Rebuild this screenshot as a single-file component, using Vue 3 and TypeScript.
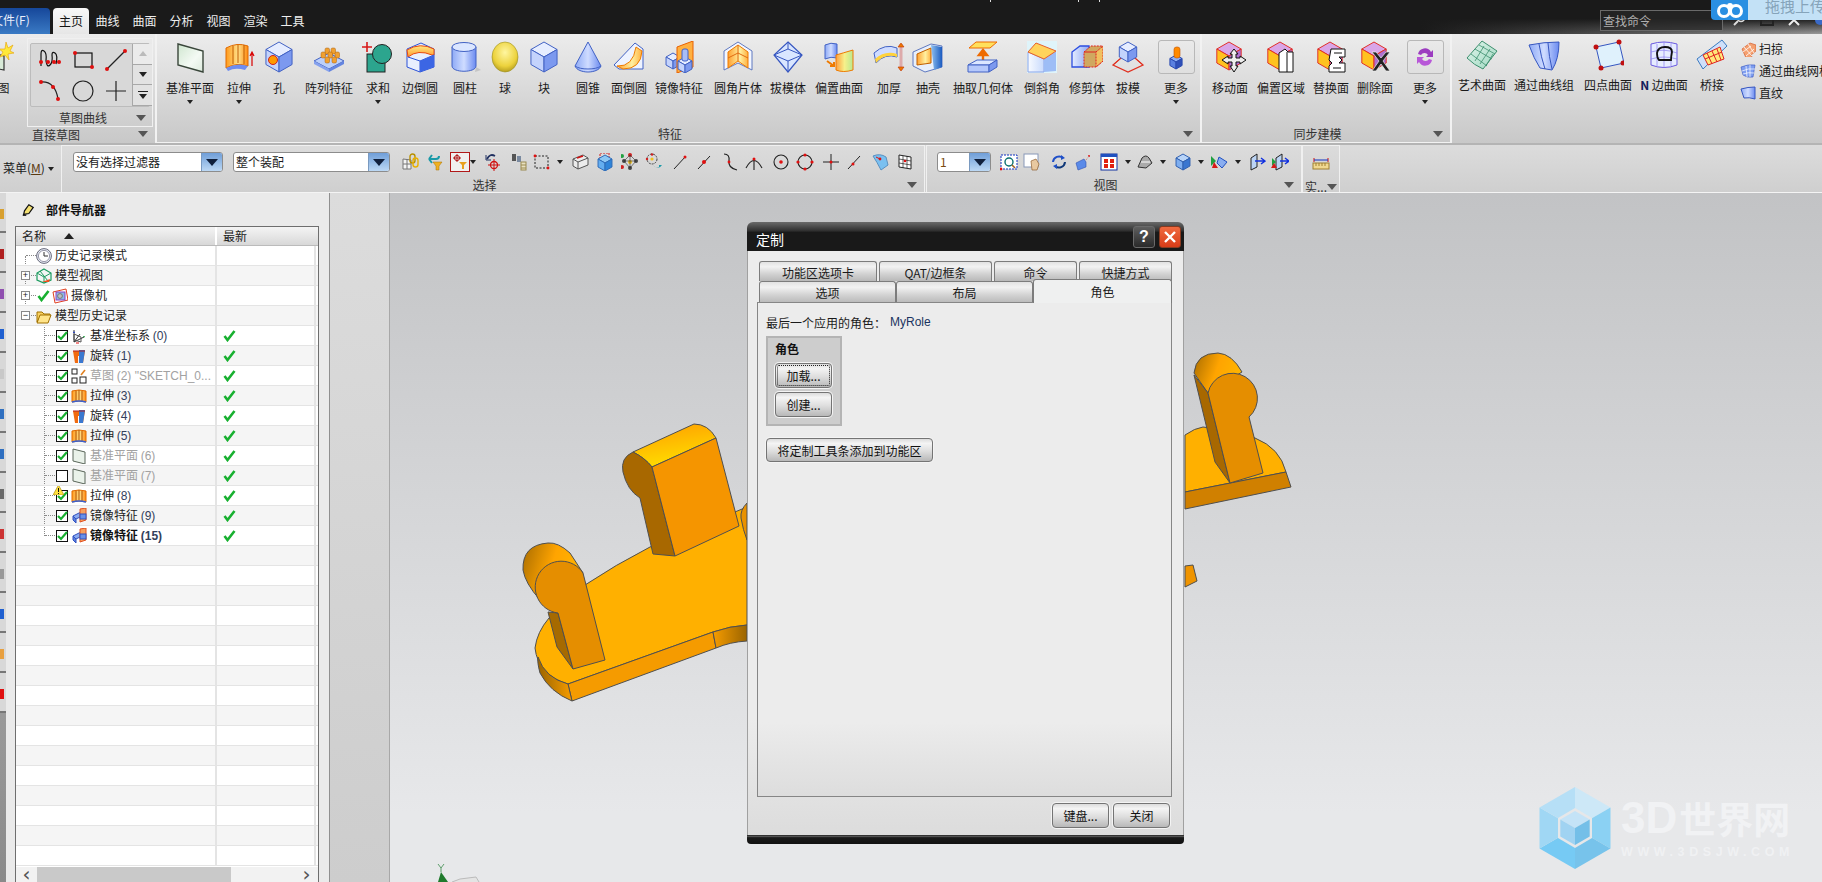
<script setup lang="ts">
interface RibbonBtn {
  label: string
  icon: string
  cx: number
  arrow?: boolean
  boxed?: boolean
}

interface ToolItem {
  cx: number
  icon?: string
  hot?: boolean
}

interface TreeRow {
  label?: string
  num?: string
  icon?: string
  level?: number
  expand?: string
  check?: boolean | null
  gray?: boolean
  bold?: boolean
  warn?: boolean
  done?: boolean
  green?: boolean
}

// iso cube used by most of the ribbon icons
function cube(cx: number, cy: number, r: number, top = '#e6edff', left = '#c4d3fc', right = '#7c99ef', st = '#4262c4') {
  const dx = r * 0.87
  const dy = r * 0.5
  const p = (a: number[][]) => a.map((q) => q.join(',')).join(' ')
  const T = [cx, cy - r], UR = [cx + dx, cy - dy], LR = [cx + dx, cy + dy], B = [cx, cy + r], LL = [cx - dx, cy + dy], UL = [cx - dx, cy - dy], C = [cx, cy]
  return `<g stroke="${st}" stroke-width="1" stroke-linejoin="round"><polygon points="${p([T, UR, C, UL])}" fill="${top}"/><polygon points="${p([UL, C, B, LL])}" fill="${left}"/><polygon points="${p([C, UR, LR, B])}" fill="${right}"/></g>`
}
const purple = (over: string) =>
  cube(15, 15, 14, '#d9a6e8', '#ffc21f', '#b070d0', '#e0302a') + over

const icons: Record<string, string> = {
  sketch: `<polygon points="1,10 22,16 22,30 1,26" fill="#d8ead8" stroke="#333" stroke-width="1.2"/><path d="M24 2l2 6 5-3-3 6 4 2-6 1 1 6-4-5-5 2 3-5-4-3 6 0z" fill="#ffe93a" stroke="#e8a000" stroke-width=".6"/>`,
  datum: `<polygon points="4,3 29,10 29,31 4,24" fill="url(#gPale)" stroke="#39463a" stroke-width="1.4"/>`,
  extrude: `<path d="M3 7Q14 1 25 5V25Q14 21 3 27Z" fill="url(#gOr)" stroke="#e06a00"/><path d="M10 5V23M15 4V22M21 4V23" stroke="#c05a00" fill="none"/><path d="M3 27Q14 21 25 25L22 29Q12 26 5 30Z" fill="#6f8df0"/><path d="M29 25V12M27 15l2-4 2 4" stroke="#d80000" stroke-width="1.2" fill="none"/>`,
  hole: cube(16, 16, 15) + `<circle cx="10" cy="19" r="4.5" fill="#ff9a00" stroke="#d02020"/>`,
  pattern: `<polygon points="16,12 31,20 16,28 1,20" fill="#bcd0fa" stroke="#4262c4"/><polygon points="1,20 16,28 16,31 1,23" fill="#86a2ee"/><polygon points="16,28 31,20 31,23 16,31" fill="#6485e0"/>` + [[12, 7], [18, 7], [8, 11], [15, 11], [22, 11], [12, 16], [19, 16]].map(([x, y]) => `<rect x="${x}" y="${y}" width="4.5" height="6" rx="1.5" fill="#f0a030" stroke="#a86010" stroke-width=".5"/>`).join(''),
  unite: `<rect x="5" y="13" width="18" height="18" fill="#2ca58e" stroke="#222"/><circle cx="20" cy="13" r="9.5" fill="#2ca58e" stroke="#222"/><path d="M5 1v10M0 6h10" stroke="#d81818" stroke-width="1.6"/>`,
  edge: `<polygon points="3,8 17,2 30,8 30,26 16,31 3,26" fill="#e8effe" stroke="#2c52d8"/><path d="M3 9Q16 1 30 8V14H28Q14 8 4 16Z" fill="url(#gYO)" stroke="#e84a10"/><path d="M16 20V31M30 14L16 20 4 16" stroke="#2c52d8" fill="none"/><polygon points="16,20 30,14 30,26 16,31" fill="#3c66e4"/>`,
  cyl: `<path d="M3 6V25C3 32 27 32 27 25V6Z" fill="url(#gBlueH)" stroke="#4262c4"/><ellipse cx="15" cy="6" rx="12" ry="4.5" fill="#dbe6ff" stroke="#4262c4"/><path d="M27 26l5 3-6 2z" fill="#aaa" opacity=".5"/>`,
  sphere: `<ellipse cx="16" cy="16" rx="13" ry="15" fill="url(#gBall)" stroke="#9c9020" stroke-width=".6"/>`,
  block: cube(16, 16, 15),
  cone: `<path d="M16 1L3 25C6 33 26 33 29 25Z" fill="url(#gBlueH)" stroke="#4262c4"/><path d="M3 25C8 29 24 29 29 25" fill="none" stroke="#4262c4"/>`,
  faceblend: `<polygon points="22,2 30,8 30,28 6,28 1,24" fill="#eef3ff" stroke="#4262c4"/><path d="M4 25Q20 26 23 6L29 10Q28 28 10 28Z" fill="url(#gYO2)" stroke="#ee7a00"/>`,
  mirror: cube(10, 20, 8) + `<polygon points="14,6 30,0 30,26 14,32" fill="#ffb040" stroke="#e86000"/>` + cube(22, 24, 8) + `<rect x="19" y="8" width="6" height="12" rx="2" fill="#a8bdf8" stroke="#4262c4"/>`,
  fsheet: `<path d="M2 29V10L16 1 30 10V29L16 22Z" fill="#f4f7ff" stroke="#5e78c0"/><path d="M6 27V11L16 4 26 11V27L16 20Z" fill="url(#gYO2)" stroke="#ee7a00"/><path d="M16 4V20M6 17L16 12 26 17" stroke="#e06a10" fill="none"/>`,
  draftb: `<polygon points="16,1 30,14 16,31 2,14" fill="#d9e6ff" stroke="#3656c0" stroke-width="1.2"/><path d="M2 14L16 8 30 14M2 14L16 20 30 14M16 8V1M16 20V31" fill="none" stroke="#3656c0"/>`,
  offset: `<path d="M2 4Q8 1 14 3V17Q8 15 2 18Z" fill="url(#gBlueH)" stroke="#4262c4"/><path d="M13 14Q20 12 30 9V29Q20 32 13 29Z" fill="url(#gGY)" stroke="#ee7a00"/><path d="M4 20l7 5M11 21v4H7" stroke="#ee7a00" stroke-width="2" fill="none"/>`,
  thicken: `<path d="M1 12Q12 2 24 7V16Q12 12 3 22Z" fill="#cfdcff" stroke="#4262c4"/><path d="M3 22Q12 12 24 16V13Q12 9 2 18Z" fill="#ffd23c"/><path d="M28 3v26" stroke="#ddaaaa" stroke-width="3"/><path d="M25 6l3-4 3 4zM25 26l3 4 3-4z" fill="#ee7a00" stroke="#c03000" stroke-width=".6"/>`,
  shell: `<polygon points="1,11 19,3 30,5 30,26 13,31 1,25" fill="#e8effa" stroke="#5e78c0"/><polygon points="5,13 19,7 19,22 5,24" fill="url(#gYO2)" stroke="#c06000"/><polygon points="19,4 30,6 30,26 22,29" fill="url(#gBlueD)"/>`,
  extract: `<polygon points="2,7 9,1 30,1 23,7" fill="#ffe05c" stroke="#ee6a00"/><path d="M16 22V11M12 14l4-5 4 5z" stroke="#ee6a00" stroke-width="2.4" fill="#ee6a00"/>` + `<polygon points="1,24 10,19 30,19 22,24" fill="#dbe6ff" stroke="#4262c4"/><polygon points="1,24 22,24 22,31 1,31" fill="#b5c8fb" stroke="#4262c4"/><polygon points="22,24 30,19 30,26 22,31" fill="#7c99ef" stroke="#4262c4"/>`,
  chamfer: `<rect x="1" y="0" width="30" height="32" fill="#dff4fa"/><polygon points="2,11 2,31 18,31 18,18" fill="url(#gPaleB)" stroke="#8aa4e8"/><polygon points="18,18 30,10 30,30 18,31" fill="#9dbdf6"/><polygon points="2,11 10,2 30,10 18,18" fill="#ffd35c" stroke="#e8602a"/>`,
  trim: `<polygon points="1,11 9,5 18,5 18,26 1,26" fill="url(#gBlueV)" stroke="#2c4ee0" stroke-width="1.3"/><polygon points="13,11 20,5 32,5 32,20 25,26 13,26" fill="#d0a860" stroke="#e02020" stroke-dasharray="2 1"/><polygon points="25,11 32,5 32,20 25,26" fill="#f0c060" stroke="#e02020" stroke-dasharray="2 1"/><path d="M13 11H25" stroke="#e02020"/>`,
  draft: `<polygon points="9,17 23,17 31,24 16,31 1,24" fill="none" stroke="#e03020" stroke-width="1.2"/><path d="M9 17L1 24M23 17L31 24" stroke="#e03020"/>` + cube(16, 11, 10),
  more: cube(16, 21, 7, '#8fb0f5', '#5a80e0', '#3050b8', '#2a4ab0') + `<rect x="14" y="6" width="6" height="11" rx="2.5" fill="#ff8a00" stroke="#c05000" stroke-width=".6"/>`,
  movef: purple(`<g stroke="#111" stroke-width="1" fill="#eee"><path d="M20 8l4 5h-2v4h4v-2l6 4-6 4v-2h-4v4h2l-4 6-4-6h2v-4h-4v2l-6-4 6-4v2h4v-4h-2z"/></g>`),
  offsetf: purple(`<path d="M14 12l6-4 3 3h5v20H14z" fill="#fff" stroke="#111"/><path d="M22 11v20" stroke="#111"/>`),
  replacef: purple(`<path d="M16 8h14v8h-6l3 3-3 3h6v9H14v-6l3-3-3-3z" fill="#fff" stroke="#111"/><path d="M19 12h8M18 27h8" stroke="#111"/>`),
  deletef: purple(`<path d="M13 11l7 9-7 10h4l5-7 5 7h4l-7-10 7-9h-4l-5 6-5-6z" fill="#222" stroke="#eee" stroke-width=".7"/>`),
  sync: `<path d="M9 13a7 7 0 0 1 13-2l2-2v7h-7l2-2a4 4 0 0 0-7 0z" fill="#9c3cc0"/><path d="M23 19a7 7 0 0 1-13 2l-2 2v-7h7l-2 2a4 4 0 0 0 7 0z" fill="#b858d8"/>`,
  studio: `<path d="M1 19L16 2 31 12 17 30Q8 26 1 19Z" fill="url(#gGreen)" stroke="#3d8f6e"/><path d="M5 15l16 12M9 10l17 10M13 6l16 9M9 22l9-15M14 25l10-15M20 27l7-12" stroke="#3d8f6e" fill="none" stroke-width=".8"/>`,
  through: `<path d="M1 6Q16 3 31 3Q31 20 24 31L12 29Q6 20 1 6Z" fill="url(#gBlueH)" stroke="#3656c0"/><path d="M11 5Q13 18 17 30M20 4Q21 18 24 30" stroke="#3656c0" fill="none"/>`,
  fourp: `<polygon points="4,8 27,3 32,24 9,29" fill="#dff1fc" stroke="#3656c0"/><g fill="#c01010"><circle cx="4" cy="8" r="2.5"/><circle cx="27" cy="3" r="2.5"/><circle cx="31" cy="24" r="2.5"/><circle cx="9" cy="29" r="2.5"/></g>`,
  nside: `<path d="M3 5Q16 1 29 5V26Q16 31 3 26Z" fill="#e6ecff" stroke="#6a5ae0"/><path d="M9 5V28M16 3V29M23 4V27M3 13Q16 9 29 14M3 20Q16 16 29 20" stroke="#8a80f0" fill="none" stroke-width=".7"/><path d="M9 14Q10 8 17 8T24 13Q23 18 23 21H11Q9 19 9 14Z" fill="none" stroke="#111" stroke-width="1.8"/>`,
  bridge: `<polygon points="1,20 26,1 31,7 7,30" fill="#cfe0fa" stroke="#3a7ac0"/><polygon points="7,16 24,8 28,20 12,26" fill="#ffe87a" stroke="#e02020"/><path d="M11 14l5 11M16 12l5 11M21 10l4 11M9 20l17-7" stroke="#e02020" fill="none"/>`,
  sweep: `<path d="M2 8l8-6 6 2 0 6-5 4 2 4-6 1z" fill="#f4a070" stroke="#d05020" stroke-width=".6" transform="scale(1)"/><path d="M4 6l8 9M8 3l6 9M3 11l8-6M6 15l8-7" stroke="#fff" stroke-width=".8" fill="none"/>`,
  mesh: `<path d="M1 4Q8 1 15 2L13 14Q7 15 3 12Z" fill="#7f9ef0" stroke="#3656c0" stroke-width=".6"/><path d="M2 8Q8 5 15 6M3 11Q8 9 14 10M6 3L7 14M10 2L10 14" stroke="#fff" fill="none" stroke-width=".7"/>`,
  ruled: `<path d="M1 4Q8 2 15 2V14Q9 12 4 13Z" fill="url(#gBlueH)" stroke="#3656c0"/>`,
  // sketch gallery
  sProfile: `<path d="M3 18V6Q3 1 6 3T8 13Q9 20 12 17T14 7Q14 3 17 5T18 16" fill="none" stroke="#111" stroke-width="1.2"/><g fill="#e01010"><circle cx="3" cy="14" r="2"/><circle cx="10" cy="14" r="2"/><circle cx="16" cy="14" r="2"/><circle cx="21" cy="14" r="2"/></g>`,
  sRect: `<rect x="4" y="5" width="17" height="14" fill="none" stroke="#111" stroke-width="1.2"/><circle cx="4" cy="5" r="2" fill="#e01010"/><circle cx="21" cy="19" r="2" fill="#e01010"/>`,
  sLine: `<path d="M3 21L21 3" stroke="#222" stroke-width="1.2"/><circle cx="3" cy="21" r="2" fill="#e01010"/><circle cx="21" cy="3" r="2" fill="#e01010"/>`,
  sArc: `<path d="M3 3Q17 2 20 20" fill="none" stroke="#222" stroke-width="1.2"/><g fill="#e01010"><circle cx="3" cy="3" r="2"/><circle cx="15" cy="8" r="2"/><circle cx="20" cy="20" r="2"/></g>`,
  sCircle: `<circle cx="12" cy="12" r="10" fill="none" stroke="#222" stroke-width="1.2"/>`,
  sCross: `<path d="M12 2V22M2 12H22" stroke="#222" stroke-width="1.2"/>`,
  // selection bar
  chain: `<path d="M1 6l8 1v9H1z" fill="#f4f4f4" stroke="#777"/><path d="M1 11h8M5 6v10" stroke="#777"/><rect x="8" y="1" width="5" height="9" rx="2.5" fill="none" stroke="#b89000" stroke-width="1.4"/><rect x="11" y="5" width="5" height="9" rx="2.5" fill="none" stroke="#e8b000" stroke-width="1.4"/>`,
  undoF: `<path d="M3 6H10Q13 6 13 3M3 6L6 2M3 6l3 4" stroke="#1b9aa8" stroke-width="2" fill="none"/><path d="M7 9h9l-3 4v4h-3v-4z" fill="#f0b020" stroke="#a87000" stroke-width=".5"/>`,
  hotF: `<circle cx="6" cy="5" r="2.6" fill="none" stroke="#b01818"/><path d="M6 1v8M2 5h8" stroke="#b01818"/><path d="M8 9h8l-3 3v4h-2v-4z" fill="#e8a020"/>`,
  undoT: `<path d="M3 6Q6 0 11 3" stroke="#203060" stroke-width="1.8" fill="none"/><path d="M2 2v5h5" stroke="#203060" fill="none"/><circle cx="10" cy="12" r="3.5" fill="none" stroke="#d01010" stroke-width="1.3"/><path d="M10 6v12M4 12h12" stroke="#d01010"/>`,
  binoc: `<rect x="2" y="1" width="4" height="7" fill="#555"/><rect x="7" y="3" width="4" height="6" fill="#7a8aa0"/><rect x="11" y="9" width="5" height="8" fill="#e8e0c0" stroke="#9a8a50"/><path d="M11 12h5M11 15h5" stroke="#9a8a50"/>`,
  dashB: `<rect x="2" y="3" width="13" height="12" fill="none" stroke="#222" stroke-dasharray="2 1.5"/><circle cx="2" cy="3" r="1.4" fill="#e01010"/><circle cx="15" cy="15" r="1.4" fill="#e01010"/>`,
  boxS: `<polygon points="2,6 12,2 17,5 17,12 7,16 2,13" fill="#ececec" stroke="#555"/><path d="M2 6l5 3 10-4M7 9v7" stroke="#555" fill="none"/><path d="M6 5l6-2" stroke="#d01010" stroke-width="1.4"/>`,
  cubeS: `<rect x="5" y="0" width="9" height="6" fill="none" stroke="#d01818" stroke-dasharray="2 1"/>` + cube(10, 10, 8, '#8ec8f4', '#64aef0', '#2f84d8', '#2f6cb8'),
  dots: [[9, 2, '#d02020'], [3, 8, '#444'], [15, 8, '#444'], [9, 15, '#444'], [9, 9, '#f0c020'], [1, 3, '#20a040'], [1, 14, '#d02020']].map(([x, y, c]) => `<circle cx="${x}" cy="${y}" r="2" fill="${c}"/>`).join('') + `<path d="M9 2L3 8 9 15 15 8ZM3 8H15M9 2V15" stroke="#333" fill="none" stroke-width=".6"/>`,
  dots2: `<circle cx="7" cy="6" r="5" fill="none" stroke="#444" stroke-dasharray="2 1"/><circle cx="7" cy="6" r="1.6" fill="#f0c020"/><circle cx="7" cy="1.5" r="1.2" fill="#d02020"/><circle cx="2" cy="6" r="1.2" fill="#d02020"/><path d="M8 12q5 6 9 0l-3 0 0 3-4-1z" fill="#1b9aa8"/>`,
  ln1: `<path d="M3 16L15 3" stroke="#222"/><circle cx="14" cy="4" r="1.5" fill="#e01010"/>`,
  ln2: `<path d="M3 16L15 3" stroke="#222"/><circle cx="9" cy="9" r="2" fill="#e01010"/>`,
  scv: `<path d="M3 1Q9 1 8 8T16 17" fill="none" stroke="#222" stroke-width="1.2"/><circle cx="8" cy="9" r="1.4" fill="#e01010"/>`,
  arc: `<path d="M1 15Q9 0 17 15M9 6V17" fill="none" stroke="#222" stroke-width="1.1"/><circle cx="9" cy="6" r="1.5" fill="#e01010"/>`,
  ctr: `<circle cx="9" cy="9" r="7" fill="none" stroke="#222" stroke-width="1.1"/><circle cx="9" cy="9" r="1.8" fill="#e01010"/>`,
  quad: `<circle cx="9" cy="9" r="7" fill="none" stroke="#222" stroke-width="1.1"/><g fill="#e01010"><circle cx="9" cy="2" r="1.6"/><circle cx="2" cy="9" r="1.6"/><circle cx="16" cy="9" r="1.6"/><circle cx="9" cy="16" r="1.6"/></g>`,
  crs: `<path d="M9 1V17M1 9H17" stroke="#222"/><circle cx="9" cy="9" r="1.5" fill="#e01010"/>`,
  ln3: `<path d="M3 16L15 3" stroke="#222"/><circle cx="8" cy="11" r="1.5" fill="#e01010"/>`,
  faceP: `<path d="M2 3Q9 0 15 4L17 12 10 17Q6 9 2 3Z" fill="#7ac0f0" stroke="#5a90c0"/><circle cx="9" cy="6" r="1.4" fill="#e01010"/><path d="M9 6L5 4" stroke="#e01010"/>`,
  gridP: `<path d="M3 2L15 4V16L3 14Z" fill="#fff" stroke="#222"/><path d="M7 3V15M11 3V15M3 6L15 8M3 10L15 12" stroke="#222" stroke-width=".7"/><circle cx="9" cy="8" r="1.3" fill="#e01010"/>`,
  // view bar
  fit: `<rect x="1" y="2" width="16" height="14" fill="#fff" stroke="#1030c0" stroke-dasharray="2 1"/><circle cx="9" cy="9" r="4" fill="none" stroke="#0a7070" stroke-width="1.4"/><path d="M12 12l3 3" stroke="#a06020" stroke-width="1.6"/><circle cx="1" cy="16" r="1.4" fill="#e01010"/>`,
  pan: `<rect x="1" y="1" width="14" height="13" fill="#fff" stroke="#8898b8"/><path d="M8 8l5-2 3 5-2 6H9z" fill="#e8c8a0" stroke="#906030" stroke-width=".7"/>`,
  rot: `<path d="M3 9a6 6 0 0 1 10-4" stroke="#2050c8" stroke-width="2" fill="none"/><path d="M15 9a6 6 0 0 1-10 4" stroke="#103878" stroke-width="2" fill="none"/><path d="M11 2l4 3-4 2zM7 16l-4-3 4-2z" fill="#2050c8"/>`,
  pers: `<path d="M2 10l8-4 2 3v5l-8 3z" fill="#5a8ae8" stroke="#3050b0" stroke-width=".6"/><circle cx="15" cy="3" r="1" fill="#e01010"/><path d="M12 7l3-4" stroke="#c08080" stroke-dasharray="1 1"/>`,
  cal: `<rect x="1" y="1" width="16" height="16" fill="#fff" stroke="#1030a0"/><rect x="1" y="1" width="16" height="3" fill="#2050c0"/><g fill="#e02010"><rect x="4" y="6" width="4" height="4"/><rect x="10" y="6" width="4" height="4"/><rect x="4" y="11" width="4" height="4"/><rect x="10" y="11" width="4" height="4"/></g>`,
  hat: `<path d="M2 14L6 5Q10 1 13 5L16 10 10 15Z" fill="#aaa" stroke="#333"/><path d="M5 9H14" stroke="#fff"/>`,
  cubeV: cube(9, 9, 8, '#b8d4f8', '#7eaef0', '#3a76d0', '#3060b0'),
  trip: `<path d="M1 3l5 5-5 5z" fill="#20a040"/><path d="M4 9l4 6H2z" fill="#d81818"/><polygon points="9,4 17,9 12,15 7,10" fill="#8aaef0" stroke="#2050c0"/>`,
  pl1: `<polygon points="3,5 9,1 9,14 3,17" fill="#bcd4f4" stroke="#222"/><path d="M7 8H16M13 5l4 3-4 3" stroke="#1030e0" stroke-width="1.4" fill="none"/>`,
  pl2: `<polygon points="5,5 11,1 11,14 5,17" fill="#bcd4f4" stroke="#222"/><path d="M1 5l4 4-4 4z" fill="#20a040"/><path d="M3 10l3 5H0z" fill="#d81818"/><path d="M9 8H17M14 5l4 3-4 3" stroke="#1030e0" stroke-width="1.4" fill="none"/>`,
  ruler: `<rect x="1" y="8" width="16" height="6" fill="#f0d890" stroke="#a08030"/><path d="M4 8v3M7 8v3M10 8v3M13 8v3" stroke="#a08030"/><path d="M2 3V7M16 3V7" stroke="#d01010"/><path d="M2 5H16" stroke="#1030c0"/>`,
  // navigator
  nav: `<path d="M3 13l1-4 5-7 5 3-5 7z" fill="#f4e070" stroke="#111" stroke-width="1.4"/><path d="M2 14h4" stroke="#111" stroke-width="1.4"/>`,
  clock: `<circle cx="8" cy="8" r="7.4" fill="#e8eef8" stroke="#667"/><circle cx="8" cy="8" r="5.6" fill="#fff" stroke="#99a"/><path d="M8 4V8H12" stroke="#333" fill="none"/>`,
  modelv: `<polygon points="8,1 15,5 15,12 8,15 1,12 1,5" fill="none" stroke="#1c9c60" stroke-width="1.2"/><path d="M1 5L8 9 15 5M8 9V15M4 3L12 13" stroke="#1c9c60" fill="none"/><path d="M6 14l8-3-1 3z" fill="#f05020"/>`,
  camera: `<polygon points="1,4 14,1 16,12 3,15" fill="#fff" stroke="#e04020"/><rect x="4" y="4" width="9" height="8" fill="#88b8e8" stroke="#9040c0"/><circle cx="8" cy="8" r="2.4" fill="#c0c0c0" stroke="#777"/>`,
  folder: `<path d="M1 4h5l2 2h6v2H5L1 14z" fill="#f8d060" stroke="#a07000"/><path d="M4 7h11l-3 8H1z" fill="#ffe48a" stroke="#a07000"/>`,
  csys: `<path d="M3 14L13 9M3 14V2M3 14L9 6" stroke="#333" fill="none"/><polygon points="3,6 10,9 10,14 3,12" fill="none" stroke="#555"/><path d="M3 3l-1 2h2z" fill="#1030c0"/><path d="M14 8l-2 0 1 2z" fill="#20a040"/><path d="M5 15h3" stroke="#e01010"/>`,
  revolve: `<path d="M2 3H14L12 15H9V8H7V15H4Z" fill="#f06a10"/><path d="M8 2H14L12 15H8Z" fill="#3a78d0"/><path d="M2 3H14" stroke="#b02020"/>`,
  sketchN: `<rect x="1" y="1" width="5" height="5" fill="none" stroke="#222"/><rect x="1" y="10" width="5" height="5" fill="none" stroke="#222"/><rect x="9" y="9" width="6" height="6" fill="none" stroke="#222"/><path d="M10 7l4-5" stroke="#e08020" stroke-width="1.6"/>`,
  extr: `<path d="M1 3Q8 1 15 3V14Q8 12 1 14Z" fill="url(#gOr)" stroke="#e06a00"/><path d="M5 3V13M8 2V12M11 3V13" stroke="#b05000"/><path d="M1 14Q8 12 15 14" stroke="#3a60d0" stroke-width="1.6" fill="none"/>`,
  plane: `<polygon points="2,1 14,4 14,16 2,13" fill="#eaf2ea" stroke="#5a665a"/>`,
  mirrorN: `<polygon points="2,8 10,4 13,7 5,11" fill="#8aaaf0" stroke="#3050c0"/><polygon points="2,8 5,11 5,15 2,12" fill="#5a80e0" stroke="#3050c0"/><polygon points="9,1 15,0 15,12 9,14" fill="#f8a060" stroke="#e05020"/><rect x="9" y="6" width="6" height="5" fill="#6a90e8" stroke="#3050c0"/>`
}

const featureBtns: RibbonBtn[] = [
  { label: '基准平面', icon: 'datum', cx: 190, arrow: true },
  { label: '拉伸', icon: 'extrude', cx: 239, arrow: true },
  { label: '孔', icon: 'hole', cx: 279 },
  { label: '阵列特征', icon: 'pattern', cx: 329 },
  { label: '求和', icon: 'unite', cx: 378, arrow: true },
  { label: '边倒圆', icon: 'edge', cx: 420 },
  { label: '圆柱', icon: 'cyl', cx: 465 },
  { label: '球', icon: 'sphere', cx: 505 },
  { label: '块', icon: 'block', cx: 544 },
  { label: '圆锥', icon: 'cone', cx: 588 },
  { label: '面倒圆', icon: 'faceblend', cx: 629 },
  { label: '镜像特征', icon: 'mirror', cx: 679 },
  { label: '圆角片体', icon: 'fsheet', cx: 738 },
  { label: '拔模体', icon: 'draftb', cx: 788 },
  { label: '偏置曲面', icon: 'offset', cx: 839 },
  { label: '加厚', icon: 'thicken', cx: 889 },
  { label: '抽壳', icon: 'shell', cx: 928 },
  { label: '抽取几何体', icon: 'extract', cx: 983 },
  { label: '倒斜角', icon: 'chamfer', cx: 1042 },
  { label: '修剪体', icon: 'trim', cx: 1087 },
  { label: '拔模', icon: 'draft', cx: 1128 },
  { label: '更多', icon: 'more', cx: 1176, arrow: true, boxed: true }
]

const syncBtns: RibbonBtn[] = [
  { label: '移动面', icon: 'movef', cx: 1230 },
  { label: '偏置区域', icon: 'offsetf', cx: 1281 },
  { label: '替换面', icon: 'replacef', cx: 1331 },
  { label: '删除面', icon: 'deletef', cx: 1375 },
  { label: '更多', icon: 'sync', cx: 1425, arrow: true, boxed: true }
]

const surfaceBtns: RibbonBtn[] = [
  { label: '艺术曲面', icon: 'studio', cx: 1482 },
  { label: '通过曲线组', icon: 'through', cx: 1544 },
  { label: '四点曲面', icon: 'fourp', cx: 1608 },
  { label: 'N 边曲面', icon: 'nside', cx: 1664 },
  { label: '桥接', icon: 'bridge', cx: 1712 }
]

const surfaceSmall = [
  { label: '扫掠', icon: 'sweep' },
  { label: '通过曲线网格', icon: 'mesh' },
  { label: '直纹', icon: 'ruled' }
]

const gallery = ['sProfile', 'sRect', 'sLine', 'sArc', 'sCircle', 'sCross']

// turn page x centres into flex margins, left to right
function place<T extends { cx: number }>(list: T[], startX: number, widthOf: (t: T) => number) {
  let right = startX
  return list.map((item) => {
    const w = widthOf(item)
    const ml = item.cx - w / 2 - right
    right = item.cx + w / 2
    return { ...item, w, ml }
  })
}
const btnWidth = (b: RibbonBtn) => Math.max(b.label.length * 12, 34)
const toolWidth = (t: ToolItem) => (t.icon ? 18 : 8)

const placedFeatures = place(featureBtns, 157, btnWidth)
const placedSync = place(syncBtns, 1202, btnWidth)
const placedSurface = place(surfaceBtns, 1452, btnWidth)

const selectTools = place<ToolItem>([
  { cx: 411, icon: 'chain' }, { cx: 435, icon: 'undoF' }, { cx: 460, icon: 'hotF', hot: true }, { cx: 473 },
  { cx: 493, icon: 'undoT' }, { cx: 519, icon: 'binoc' }, { cx: 542, icon: 'dashB' }, { cx: 560 },
  { cx: 580, icon: 'boxS' }, { cx: 604, icon: 'cubeS' }, { cx: 630, icon: 'dots' }, { cx: 654, icon: 'dots2' },
  { cx: 680, icon: 'ln1' }, { cx: 704, icon: 'ln2' }, { cx: 730, icon: 'scv' }, { cx: 754, icon: 'arc' },
  { cx: 781, icon: 'ctr' }, { cx: 805, icon: 'quad' }, { cx: 831, icon: 'crs' }, { cx: 854, icon: 'ln3' },
  { cx: 880, icon: 'faceP' }, { cx: 905, icon: 'gridP' }
], 390, toolWidth)

const viewTools = place<ToolItem>([
  { cx: 1009, icon: 'fit' }, { cx: 1032, icon: 'pan' }, { cx: 1059, icon: 'rot' }, { cx: 1083, icon: 'pers' },
  { cx: 1109, icon: 'cal' }, { cx: 1128 }, { cx: 1145, icon: 'hat' }, { cx: 1163 }, { cx: 1183, icon: 'cubeV' }, { cx: 1201 },
  { cx: 1219, icon: 'trip' }, { cx: 1238 }, { cx: 1257, icon: 'pl1' }, { cx: 1280, icon: 'pl2' }
], 991, toolWidth)

const treeRows: TreeRow[] = [
  { label: '历史记录模式', icon: 'clock', level: 0 },
  { label: '模型视图', icon: 'modelv', level: 0, expand: '+' },
  { label: '摄像机', icon: 'camera', level: 0, expand: '+', green: true },
  { label: '模型历史记录', icon: 'folder', level: 0, expand: '-' },
  { label: '基准坐标系', num: '(0)', icon: 'csys', level: 1, check: true, done: true },
  { label: '旋转', num: '(1)', icon: 'revolve', level: 1, check: true, done: true },
  { label: '草图', num: '(2) "SKETCH_0...', icon: 'sketchN', level: 1, check: true, gray: true, done: true },
  { label: '拉伸', num: '(3)', icon: 'extr', level: 1, check: true, done: true },
  { label: '旋转', num: '(4)', icon: 'revolve', level: 1, check: true, done: true },
  { label: '拉伸', num: '(5)', icon: 'extr', level: 1, check: true, done: true },
  { label: '基准平面', num: '(6)', icon: 'plane', level: 1, check: true, gray: true, done: true },
  { label: '基准平面', num: '(7)', icon: 'plane', level: 1, check: false, gray: true, done: true },
  { label: '拉伸', num: '(8)', icon: 'extr', level: 1, check: true, warn: true, done: true },
  { label: '镜像特征', num: '(9)', icon: 'mirrorN', level: 1, check: true, done: true },
  { label: '镜像特征', num: '(15)', icon: 'mirrorN', level: 1, check: true, bold: true, done: true }
]
while (treeRows.length < 31) treeRows.push({})

const stripCells = ['#d8a030', '#b02020', '#9050b0', '#2060d0', '#c8c8c8', '#3070c0', '#2f6fc0', '#6a6a6a', '#cc3333', '#999', '#2060d0', '#e8a040', '#e01010']
</script>

<template>
  <div class="app">
    <svg class="defs" width="0" height="0" aria-hidden="true">
      <defs>
        <linearGradient id="gPale" x1="0" y1="0" x2="1" y2="1"><stop offset="0" stop-color="#cfe6cf" /><stop offset="0.6" stop-color="#f4faf4" /><stop offset="1" stop-color="#dceadc" /></linearGradient>
        <linearGradient id="gOr" x1="0" y1="0" x2="1" y2="0"><stop offset="0" stop-color="#ff9a1c" /><stop offset="0.55" stop-color="#ffe08a" /><stop offset="1" stop-color="#ff8a10" /></linearGradient>
        <linearGradient id="gYO" x1="0" y1="0" x2="0" y2="1"><stop offset="0" stop-color="#ffe880" /><stop offset="1" stop-color="#ff9a30" /></linearGradient>
        <linearGradient id="gYO2" x1="0" y1="0" x2="1" y2="0"><stop offset="0" stop-color="#ffa030" /><stop offset="0.6" stop-color="#fff0a0" /><stop offset="1" stop-color="#ffb040" /></linearGradient>
        <linearGradient id="gGY" x1="0" y1="0" x2="1" y2="0"><stop offset="0" stop-color="#ffa040" /><stop offset="0.5" stop-color="#f6f08a" /><stop offset="1" stop-color="#b8e890" /></linearGradient>
        <linearGradient id="gBlueH" x1="0" y1="0" x2="1" y2="0"><stop offset="0" stop-color="#8eaaf6" /><stop offset="0.5" stop-color="#cfdcff" /><stop offset="1" stop-color="#6a8af0" /></linearGradient>
        <linearGradient id="gBlueV" x1="0" y1="0" x2="1" y2="0"><stop offset="0" stop-color="#e4ecff" /><stop offset="1" stop-color="#8fa8f4" /></linearGradient>
        <linearGradient id="gBlueD" x1="0" y1="0" x2="1" y2="0"><stop offset="0" stop-color="#8fc0f0" /><stop offset="1" stop-color="#1c5cc0" /></linearGradient>
        <linearGradient id="gPaleB" x1="0" y1="0" x2="1" y2="0"><stop offset="0" stop-color="#f8fbff" /><stop offset="1" stop-color="#c8dafc" /></linearGradient>
        <linearGradient id="gGreen" x1="0" y1="0" x2="1" y2="1"><stop offset="0" stop-color="#e0f4ec" /><stop offset="1" stop-color="#9fd8c0" /></linearGradient>
        <radialGradient id="gBall" cx="0.5" cy="0.35" r="0.65"><stop offset="0" stop-color="#fff6a0" /><stop offset="0.7" stop-color="#ecd23c" /><stop offset="1" stop-color="#b8a020" /></radialGradient>
        <linearGradient id="mHead" x1="0" y1="0" x2="1" y2="0.3"><stop offset="0" stop-color="#a86c00" /><stop offset="0.55" stop-color="#ffa400" /><stop offset="1" stop-color="#ffb400" /></linearGradient>
        <linearGradient id="mTop" x1="0" y1="0" x2="0.3" y2="1"><stop offset="0" stop-color="#ff9c00" /><stop offset="1" stop-color="#ffdc00" /></linearGradient>
        <linearGradient id="mWall" x1="0" y1="0" x2="1" y2="0"><stop offset="0" stop-color="#f69c00" /><stop offset="1" stop-color="#9a6400" /></linearGradient>
        <linearGradient id="mSide" x1="0" y1="0" x2="1" y2="0"><stop offset="0" stop-color="#9a6400" /><stop offset="1" stop-color="#f69c00" /></linearGradient>
      </defs>
    </svg>

    <!-- black title row with the ribbon tabs -->
    <header class="topbar">
      <div class="title-ticks"><i></i><i></i><i></i></div>
      <div class="file-tab">文件(F)</div>
      <div class="tab active">主页</div>
      <div class="tab">曲线</div>
      <div class="tab">曲面</div>
      <div class="tab">分析</div>
      <div class="tab">视图</div>
      <div class="tab">渲染</div>
      <div class="tab">工具</div>
      <div class="search">查找命令</div>
      <div class="win-icons">
        <svg width="14" height="12" viewBox="0 0 14 12"><circle cx="8" cy="4" r="3.5" fill="none" stroke="#ddd" stroke-width="1.6" /><path d="M5 7L1 11" stroke="#ddd" stroke-width="2" /></svg>
        <svg width="14" height="12" viewBox="0 0 14 12"><rect x="1" y="1" width="12" height="10" fill="none" stroke="#222" stroke-width="2" /></svg>
        <svg width="14" height="12" viewBox="0 0 14 12"><path d="M2 1L12 11M12 1L2 11" stroke="#eee" stroke-width="2" /></svg>
        <svg width="8" height="12" viewBox="0 0 8 12"><circle cx="6" cy="6" r="5" fill="#3a6ac8" /></svg>
      </div>
      <div class="upload">
        <span class="upload-logo">
          <svg width="28" height="16" viewBox="0 0 28 16"><circle cx="8" cy="9" r="5.5" fill="none" stroke="#fff" stroke-width="3" /><circle cx="20" cy="9" r="5.5" fill="none" stroke="#fff" stroke-width="3" /><circle cx="14" cy="4" r="3" fill="#fff" /></svg>
        </span>
        <span class="upload-text">拖拽上传</span>
      </div>
    </header>

    <!-- ribbon -->
    <section class="ribbon">
      <div class="rgroup g-sketch">
        <div class="sketch-row">
          <div class="partial">
            <svg width="32" height="32" viewBox="0 0 32 32" v-html="icons.sketch"></svg>
            <span class="rlabel">草图</span>
          </div>
          <div class="sketch-box">
            <div class="gallery">
              <div class="gallery-grid">
                <div v-for="g in gallery" :key="g" class="gallery-cell">
                  <svg width="24" height="24" viewBox="0 0 24 24" v-html="icons[g]"></svg>
                </div>
              </div>
              <div class="gallery-scroll">
                <span class="sc-btn off"><i class="tri up"></i></span>
                <span class="sc-btn"><i class="tri"></i></span>
                <span class="sc-btn"><i class="bar"></i><i class="tri"></i></span>
              </div>
            </div>
            <div class="glabel sub">
              <span class="glabel-text">草图曲线</span><i class="tri gray"></i>
            </div>
          </div>
        </div>
        <div class="glabel direct">
          <span class="glabel-text">直接草图</span><i class="tri gray"></i>
        </div>
      </div>

      <div class="rgroup g-features">
        <div class="btn-row">
          <div v-for="b in placedFeatures" :key="b.label + b.cx" class="rbtn" :style="{ width: b.w + 'px', marginLeft: b.ml + 'px' }">
            <span class="ricon" :class="{ boxed: b.boxed }">
              <svg width="32" height="32" viewBox="0 0 32 32" v-html="icons[b.icon]"></svg>
            </span>
            <span class="rlabel">{{ b.label }}</span>
            <i v-if="b.arrow" class="tri small"></i>
          </div>
        </div>
        <div class="glabel">
          <span class="glabel-text">特征</span><i class="tri gray"></i>
        </div>
      </div>

      <div class="rgroup g-sync">
        <div class="btn-row">
          <div v-for="b in placedSync" :key="b.label + b.cx" class="rbtn" :style="{ width: b.w + 'px', marginLeft: b.ml + 'px' }">
            <span class="ricon" :class="{ boxed: b.boxed }">
              <svg width="32" height="32" viewBox="0 0 32 32" v-html="icons[b.icon]"></svg>
            </span>
            <span class="rlabel">{{ b.label }}</span>
            <i v-if="b.arrow" class="tri small"></i>
          </div>
        </div>
        <div class="glabel">
          <span class="glabel-text">同步建模</span><i class="tri gray"></i>
        </div>
      </div>

      <div class="rgroup g-surface">
        <div class="btn-row">
          <div v-for="b in placedSurface" :key="b.label" class="rbtn" :style="{ width: b.w + 'px', marginLeft: b.ml + 'px' }">
            <span class="ricon">
              <svg width="32" height="32" viewBox="0 0 32 32" v-html="icons[b.icon]"></svg>
            </span>
            <span v-if="b.label.startsWith('N')" class="rlabel"><b class="n">N</b> 边曲面</span>
            <span v-else class="rlabel">{{ b.label }}</span>
          </div>
          <div class="small-list">
            <div v-for="s in surfaceSmall" :key="s.label" class="small-item">
              <svg width="16" height="16" viewBox="0 0 16 16" v-html="icons[s.icon]"></svg>
              <span>{{ s.label }}</span>
            </div>
          </div>
        </div>
      </div>
    </section>

    <!-- selection and view bars -->
    <section class="toolbar">
      <div class="menu-btn">菜单(<u>M</u>)<i class="tri small"></i></div>
      <div class="tgroup g-select">
        <div class="tool-row">
          <div class="combo c-filter"><span>没有选择过滤器</span><span class="combo-btn"><i class="tri big"></i></span></div>
          <div class="combo c-scope"><span>整个装配</span><span class="combo-btn"><i class="tri big"></i></span></div>
          <template v-for="t in selectTools" :key="t.cx">
            <span v-if="t.icon" class="tool" :class="{ hot: t.hot }" :style="{ marginLeft: t.ml + 'px' }">
              <svg width="18" height="18" viewBox="0 0 18 18" v-html="icons[t.icon]"></svg>
            </span>
            <span v-else class="tool-arrow" :style="{ marginLeft: t.ml + 'px' }"><i class="tri small"></i></span>
          </template>
        </div>
        <div class="glabel"><span class="glabel-text">选择</span><i class="tri gray"></i></div>
      </div>
      <div class="tgroup g-view">
        <div class="tool-row">
          <div class="combo c-layer"><span class="one">1</span><span class="combo-btn"><i class="tri big"></i></span></div>
          <template v-for="t in viewTools" :key="t.cx">
            <span v-if="t.icon" class="tool" :style="{ marginLeft: t.ml + 'px' }">
              <svg width="18" height="18" viewBox="0 0 18 18" v-html="icons[t.icon]"></svg>
            </span>
            <span v-else class="tool-arrow" :style="{ marginLeft: t.ml + 'px' }"><i class="tri small"></i></span>
          </template>
        </div>
        <div class="glabel"><span class="glabel-text">视图</span><i class="tri gray"></i></div>
      </div>
      <div class="tgroup g-inst">
        <div class="tool-row center">
          <svg width="18" height="18" viewBox="0 0 18 18" v-html="icons.ruler"></svg>
        </div>
        <div class="glabel"><span class="glabel-text">实...</span><i class="tri gray"></i></div>
      </div>
    </section>

    <main class="main">
      <aside class="strip">
        <div v-for="(c, i) in stripCells" :key="i" class="strip-cell"><span :style="{ background: c }"></span></div>
      </aside>

      <div class="navigator">
        <div class="nav-title">
          <svg width="14" height="14" viewBox="0 0 16 16" v-html="icons.nav"></svg>
          <span>部件导航器</span>
        </div>
        <div class="tree">
          <div class="tree-head">
            <div class="th name">名称<i class="tri up dark"></i></div>
            <div class="th">最新</div>
          </div>
          <div class="tree-body">
            <div v-for="(r, i) in treeRows" :key="i" class="tree-row" :class="{ alt: i % 2 === 1 }">
              <div class="cell-name" :class="{ gray: r.gray, bold: r.bold }">
                <template v-if="r.label">
                  <i v-if="r.level === 0 && i < 3" class="vl top"></i>
                  <i v-if="r.level === 1" class="vl lvl1" :class="{ last: i === 14 }"></i>
                  <i class="hl" :class="r.level === 1 ? 'hl1' : 'hl0'"></i>
                  <span v-if="r.expand" class="expander">{{ r.expand === '+' ? '+' : '−' }}</span>
                  <span v-if="r.level === 1" class="chk-wrap">
                    <span class="chk">
                      <svg v-if="r.check" width="12" height="12" viewBox="0 0 12 12"><path d="M2 6l3 3 6-7" fill="none" stroke="#18b030" stroke-width="2.2" /></svg>
                    </span>
                    <svg v-if="r.warn" class="warn" width="11" height="10" viewBox="0 0 11 10"><polygon points="5.5,0 11,10 0,10" fill="#ffe040" stroke="#a08000" stroke-width=".6" /><path d="M5.5 3v4M5.5 8v1" stroke="#111" /></svg>
                  </span>
                  <svg v-if="r.green" class="green" width="13" height="12" viewBox="0 0 12 12"><path d="M1 6l3 4 7-9" fill="none" stroke="#18b030" stroke-width="2.6" /></svg>
                  <svg class="row-icon" :class="'lv' + r.level" width="16" height="16" viewBox="0 0 16 16" v-html="icons[r.icon!]"></svg>
                  <span class="row-text">{{ r.label }} <span class="num">{{ r.num }}</span></span>
                </template>
              </div>
              <div class="cell-state">
                <svg v-if="r.done" width="13" height="12" viewBox="0 0 12 12"><path d="M1 6l3 4 7-9" fill="none" stroke="#18b030" stroke-width="2.6" /></svg>
              </div>
            </div>
          </div>
          <div class="hscroll">
            <span class="chev">‹</span>
            <span class="thumb"></span>
            <span class="chev right">›</span>
          </div>
        </div>
      </div>

      <div class="gutter"></div>

      <div class="viewport">
        <!-- the part, in page coordinates -->
        <svg class="model" width="1432" height="689" viewBox="390 193 1432 689" stroke="#4f4f4f" stroke-width="1" stroke-linejoin="round">
          <path d="M585 585Q615 565 650 547L747 507V625Q730 626 713 632L568 684Q538 675 535 648Q537 632 549 618Z" fill="#ffb000" />
          <path d="M568 684L713 632 716 648 572 701Z" fill="#f59b00" />
          <path d="M713 632Q730 626 747 625V641Q730 642 716 648Z" fill="url(#mWall)" />
          <path d="M538 657Q537 662 540 673Q550 692 572 701L568 684Q545 678 538 657Z" fill="url(#mSide)" />
          <path d="M570 553Q558 542 548 543Q522 545 523 570Q525 583 540 600L583 573Z" fill="url(#mHead)" />
          <path d="M548 612L558 613 573 669 557 647Z" fill="#a66a00" />
          <path d="M583 573L605 660 573 669 558 613A26 26 0 1 1 583 573Z" fill="#e58e00" />
          <path d="M747 503Q740 510 741 518Q743 530 747 540Z" fill="#ea9200" />
          <path d="M633 452L694 424Q708 424 716 438L652 467Q645 458 633 452Z" fill="url(#mTop)" />
          <path d="M633 452Q620 458 623 472Q627 490 640 498L653 554 675 556 652 467Q645 458 633 452Z" fill="#a86800" />
          <path d="M652 467L716 438 739 526 675 556Z" fill="#f59500" />

          <path d="M1185 435Q1195 428 1203 427L1240 432 1255 438Q1280 448 1286 472L1185 492Z" fill="#ffb000" />
          <path d="M1185 492L1286 472 1291 487 1185 509Z" fill="#d08000" />
          <path d="M1194 373Q1196 353 1218 353Q1232 354 1242 372L1208 393Z" fill="url(#mHead)" />
          <path d="M1194 375L1208 393 1230 483 1215 462Z" fill="#a86800" />
          <path d="M1208 393L1230 483 1263 473 1249 417A25 25 0 1 0 1208 393Z" fill="#e58e00" />
          <path d="M1185 566L1193 565 1197 581 1185 587Z" fill="#ef9400" />

          <g stroke="none">
            <polygon points="441,872 448,882 438,882" fill="#1f7a2c" />
          </g>
          <path d="M438 864l3 4 3-4M441 868v4" fill="none" stroke="#3a8a4a" stroke-width=".8" />
          <path d="M452 882l8-3 16-2 3 5" fill="#e4e4e4" stroke="#bbb" />
        </svg>

        <!-- watermark -->
        <div class="watermark">
          <svg width="84" height="84" viewBox="-42 -42 84 84">
            <polygon points="0,-41 35.5,-20.5 0,0" fill="#cde8f7" />
            <polygon points="35.5,-20.5 35.5,20.5 0,0" fill="#8bd1f3" />
            <polygon points="35.5,20.5 0,41 0,0" fill="#77c3eb" />
            <polygon points="0,41 -35.5,20.5 0,0" fill="#76caf4" />
            <polygon points="-35.5,20.5 -35.5,-20.5 0,0" fill="#a0d7f4" />
            <polygon points="-35.5,-20.5 0,-41 0,0" fill="#b6dff6" />
            <polygon points="0,-20 17,-10 17,10 0,20 -17,10 -17,-10" fill="#e6e7e9" />
            <polygon points="0,-17 14.7,-8.5 0,0 -14.7,-8.5" fill="#c4e3f7" />
            <polygon points="-14.7,-8.5 0,0 0,17 -14.7,8.5" fill="#a0d3f2" />
            <polygon points="14.7,-8.5 14.7,8.5 0,17 0,0" fill="#74bfe8" />
          </svg>
          <div class="wm-text">
            <div class="wm-big"><span class="wm-latin">3D</span>世界网</div>
            <div class="wm-small">WWW.3DSJW.COM</div>
          </div>
        </div>

        <!-- customize dialog -->
        <div class="dialog">
          <div class="dlg-title">
            <span class="dlg-name">定制</span>
            <span class="dlg-help">?</span>
            <span class="dlg-close">
              <svg width="12" height="12" viewBox="0 0 12 12"><path d="M1 1L11 11M11 1L1 11" stroke="#fff" stroke-width="2.4" /></svg>
            </span>
          </div>
          <div class="dlg-body">
            <div class="tabs tabs-a">
              <div class="dtab">功能区选项卡</div>
              <div class="dtab">QAT/边框条</div>
              <div class="dtab">命令</div>
              <div class="dtab">快捷方式</div>
            </div>
            <div class="tabs tabs-b">
              <div class="dtab">选项</div>
              <div class="dtab">布局</div>
              <div class="dtab on">角色</div>
            </div>
            <div class="panel">
              <div class="last-role"><span>最后一个应用的角色：</span><span class="role-name">MyRole</span></div>
              <div class="role-box">
                <div class="role-title">角色</div>
                <button class="pbtn focus">加载...</button>
                <button class="pbtn">创建...</button>
              </div>
              <button class="pbtn wide">将定制工具条添加到功能区</button>
            </div>
            <div class="dlg-actions">
              <button class="pbtn">键盘...</button>
              <button class="pbtn">关闭</button>
            </div>
          </div>
          <div class="dlg-foot"></div>
        </div>
      </div>
    </main>
  </div>
</template>

<style scoped>
.app {
  width: 1822px;
  height: 882px;
  display: flex;
  flex-direction: column;
  overflow: hidden;
  font-family: "Noto Sans CJK SC", "Liberation Sans", sans-serif;
  font-size: 12px;
  color: #1a1a1a;
  background: #d4d4d4;
  position: relative;
}

.defs {
  position: absolute;
}

i {
  font-style: normal;
}

.tri {
  display: inline-block;
  width: 0;
  height: 0;
  border-left: 5px solid transparent;
  border-right: 5px solid transparent;
  border-top: 6px solid #222;
}

.tri.up {
  border-top: 0;
  border-bottom: 6px solid #bbb;
}

.tri.up.dark {
  border-bottom-color: #222;
  margin-left: 18px;
  vertical-align: 2px;
}

.tri.gray {
  border-top-color: #555;
}

.tri.small {
  border-left-width: 3px;
  border-right-width: 3px;
  border-top-width: 4px;
}

.tri.big {
  border-left-width: 6px;
  border-right-width: 6px;
  border-top-width: 7px;
  border-top-color: #10203c;
}

/* top bar */
.topbar {
  height: 34px;
  flex: none;
  display: flex;
  align-items: flex-end;
  background:
    linear-gradient(#1a1a1a 55%, rgba(26, 26, 26, 0) 100%),
    linear-gradient(90deg, #1a1a1a 78%, #5a5a5a 90%, #9a9a9a 100%);
  color: #eee;
  position: relative;
}

.title-ticks {
  position: absolute;
  left: 990px;
  top: 0;
  width: 110px;
  height: 2px;
  display: flex;
  gap: 87px;
}

.title-ticks i {
  display: block;
  width: 2px;
  height: 2px;
  background: #ddd;
}

.title-ticks i:last-child {
  margin-left: -67px;
}

.file-tab {
  width: 50px;
  height: 26px;
  margin-right: 3px;
  text-indent: -9px;
  line-height: 24px;
  color: #e8eefc;
  background: linear-gradient(#16479a, #3a7ac4);
  border-radius: 0 4px 0 0;
  overflow: hidden;
  white-space: nowrap;
}

.tab {
  width: 37px;
  height: 26px;
  line-height: 26px;
  text-align: center;
}

.tab.active {
  width: 36px;
  color: #111;
  background: linear-gradient(#f8f8f8, #e6e6e6);
  border-radius: 4px 4px 0 0;
}

.search {
  margin-left: auto;
  margin-bottom: 3px;
  margin-right: 10px;
  width: 123px;
  height: 21px;
  box-sizing: border-box;
  border: 1px solid #6a6a6a;
  padding-left: 2px;
  line-height: 19px;
  color: #b0b0b0;
  background: rgba(40, 40, 40, 0.7);
}

.win-icons {
  width: 89px;
  height: 13px;
  margin-bottom: 8px;
  display: flex;
  justify-content: space-between;
  align-items: flex-end;
  overflow: hidden;
}

.upload {
  position: absolute;
  top: 0;
  left: 1711px;
  width: 111px;
  height: 20px;
  display: flex;
  overflow: hidden;
  border-radius: 0 0 0 4px;
}

.upload-logo {
  width: 37px;
  background: #2a8fe2;
  display: flex;
  align-items: center;
  justify-content: center;
}

.upload-text {
  flex: 1;
  padding-left: 17px;
  background: #c3e1f6;
  color: #86a4ba;
  font-size: 15px;
  line-height: 11px;
  white-space: nowrap;
  overflow: hidden;
}

/* ribbon */
.ribbon {
  height: 109px;
  flex: none;
  display: flex;
  background: linear-gradient(#ececec, #c8c8c8);
  border-bottom: 2px solid #b4b4b4;
  box-sizing: content-box;
}

.rgroup {
  display: flex;
  flex-direction: column;
  height: 109px;
  box-sizing: border-box;
  border-right: 2px solid #f2f2f2;
  border-bottom: 1px solid #f2f2f2;
  overflow: hidden;
}

.g-sketch {
  width: 157px;
  border-bottom: 0;
}

.g-features {
  width: 1045px;
}

.g-sync {
  width: 250px;
}

.g-surface {
  flex: 1;
  border: 0;
}

.btn-row {
  flex: 1;
  display: flex;
}

.rbtn {
  flex: none;
  display: flex;
  flex-direction: column;
  align-items: center;
  padding-top: 6px;
}

.ricon {
  display: flex;
  align-items: center;
  justify-content: center;
  height: 34px;
  width: 34px;
  flex: none;
}

.ricon.boxed {
  width: 37px;
  box-sizing: border-box;
  border: 1px solid #b8b8b8;
  border-radius: 3px;
}

.ricon svg {
  flex: none;
}

.rlabel {
  display: block;
  margin-top: 5px;
  line-height: 17px;
  white-space: nowrap;
}

.rbtn .tri.small {
  margin-top: 4px;
}

.n {
  color: #14205a;
}

.g-surface .rbtn {
  padding-top: 4px;
}

.g-surface .rlabel {
  margin-top: 4px;
}

.small-list {
  margin-left: 11px;
  padding-top: 4px;
  display: flex;
  flex-direction: column;
  gap: 1px;
  white-space: nowrap;
}

.small-item {
  height: 21px;
  display: flex;
  align-items: center;
  gap: 3px;
}

.glabel {
  height: 18px;
  flex: none;
  display: flex;
  align-items: center;
  padding-top: 1px;
  box-sizing: border-box;
  color: #333;
  font-size: 12px;
}

.glabel-text {
  flex: 1;
  text-align: center;
  white-space: nowrap;
}

.glabel .tri {
  margin-right: 7px;
}

/* sketch group */
.sketch-row {
  flex: 1;
  display: flex;
  padding-top: 4px;
}

.partial {
  width: 27px;
  flex: none;
  padding-top: 2px;
  margin-left: -16px;
  margin-right: 16px;
  display: flex;
  flex-direction: column;
  align-items: center;
}

.partial .rlabel {
  margin-top: 7px;
}

.sketch-box {
  width: 126px;
  height: 89px;
  box-sizing: border-box;
  border: 1px solid #f0f0f0;
  padding: 4px 2px 0 2px;
  display: flex;
  flex-direction: column;
}

.gallery {
  width: 120px;
  height: 65px;
  display: flex;
  background: #d8d8d8;
  border: 1px solid #bcbcbc;
  box-sizing: border-box;
  border-radius: 2px;
}

.gallery-grid {
  flex: 1;
  display: grid;
  grid-template-columns: repeat(3, 33px);
  grid-template-rows: repeat(2, 1fr);
  padding-left: 2px;
}

.gallery-cell {
  display: flex;
  align-items: center;
  justify-content: center;
}

.gallery-scroll {
  width: 20px;
  flex: none;
  display: flex;
  flex-direction: column;
}

.sc-btn {
  flex: 1;
  display: flex;
  flex-direction: column;
  align-items: center;
  justify-content: center;
  gap: 2px;
  background: #e2e2e2;
  border-left: 1px solid #a8a8a8;
  border-bottom: 1px solid #a8a8a8;
}

.sc-btn.off {
  background: #ebebeb;
}

.sc-btn .bar {
  width: 10px;
  height: 1px;
  background: #222;
}

.sc-btn .tri {
  border-left-width: 4px;
  border-right-width: 4px;
  border-top-width: 5px;
}

.sc-btn .tri.up {
  border-top: 0;
  border-bottom-width: 5px;
}

.glabel.sub {
  flex: 1;
  height: auto;
  padding: 2px 0 0;
}

.glabel.sub .tri {
  margin-right: 4px;
}

.glabel.direct {
  height: 16px;
  padding: 0 0 2px;
}

.glabel.direct .glabel-text {
  flex: none;
  width: 112px;
}

.glabel.direct .tri {
  margin-left: 26px;
}

/* toolbar */
.toolbar {
  height: 48px;
  flex: none;
  display: flex;
  background: linear-gradient(#dcdcdc, #cfcfcf);
  border-bottom: 1px solid #f4f4f4;
  box-sizing: border-box;
}

.menu-btn {
  width: 61px;
  flex: none;
  padding: 14px 0 0 3px;
  box-sizing: border-box;
  white-space: nowrap;
}

.menu-btn .tri {
  margin-left: 3px;
  vertical-align: 2px;
}

.menu-btn u {
  color: #5a3a10;
}

.tgroup {
  display: flex;
  flex-direction: column;
  box-sizing: border-box;
  height: 47px;
  border: 1px solid #f0f0f0;
  border-bottom: 0;
  overflow: hidden;
}

.g-select {
  width: 864px;
}

.g-view {
  width: 376px;
  margin-left: 1px;
  border-left-width: 1px;
}

.g-inst {
  width: 38px;
}

.tool-row {
  height: 28px;
  flex: none;
  display: flex;
  align-items: center;
  padding-top: 2px;
}

.tool-row.center {
  justify-content: center;
  padding-top: 4px;
}

.g-select .glabel,
.g-view .glabel,
.g-inst .glabel {
  flex: 1;
  height: auto;
  padding: 0;
}

.g-inst .glabel-text {
  text-align: left;
  padding-left: 2px;
}

.g-inst .tri {
  margin-right: 6px;
}

.tool {
  width: 18px;
  height: 18px;
  flex: none;
  display: block;
  position: relative;
}

.tool svg {
  display: block;
}

.tool.hot {
  outline: 1px solid #b01818;
  background: #f0f0f0;
}

.tool-arrow {
  width: 8px;
  flex: none;
  display: flex;
  justify-content: center;
}

.combo {
  height: 20px;
  flex: none;
  box-sizing: border-box;
  display: flex;
  justify-content: space-between;
  background: #fff;
  border: 1px solid #8c8c8c;
  border-radius: 3px;
  line-height: 18px;
  padding-left: 2px;
  white-space: nowrap;
  overflow: hidden;
}

.c-filter {
  width: 150px;
  margin-left: 11px;
}

.c-scope {
  width: 157px;
  margin-left: 10px;
}

.c-layer {
  width: 54px;
  margin-left: 10px;
}

.one {
  color: #7a4a10;
}

.combo-btn {
  width: 20px;
  display: flex;
  align-items: center;
  justify-content: center;
  background: linear-gradient(#6f9ed8, #bcd8f4);
  border-left: 1px solid #7a9ac0;
}

/* main area */
.main {
  flex: 1;
  display: flex;
  min-height: 0;
  position: relative;
}

.strip {
  width: 6px;
  flex: none;
  background: linear-gradient(#c8c8c8, #8a8a8a);
  overflow: hidden;
}

.strip-cell {
  height: 40px;
  box-sizing: border-box;
  border-bottom: 2px solid #777;
  background: #d8d8d8;
  padding-top: 16px;
}

.strip-cell span {
  display: block;
  width: 4px;
  height: 10px;
}

.navigator {
  width: 324px;
  flex: none;
  box-sizing: border-box;
  padding: 0 10px;
  background: #eaeaea;
  border-right: 1px solid #8f8f8f;
  display: flex;
  flex-direction: column;
}

.nav-title {
  height: 33px;
  flex: none;
  display: flex;
  align-items: center;
  gap: 11px;
  padding-left: 5px;
  font-weight: 700;
  color: #111;
}

.tree {
  flex: 1;
  width: 304px;
  margin-left: -1px;
  box-sizing: border-box;
  border: 1px solid #6e6e6e;
  border-bottom: 0;
  background: #fff;
  display: flex;
  flex-direction: column;
  min-height: 0;
  overflow: hidden;
}

.tree-head {
  height: 18px;
  flex: none;
  display: flex;
  background: linear-gradient(#f4f4f4, #d8d8d8);
  border-bottom: 1px solid #bbb;
}

.th {
  line-height: 18px;
  padding-left: 6px;
  color: #222;
}

.th.name {
  width: 201px;
  box-sizing: border-box;
  border-right: 2px solid #fff;
}

.tree-body {
  flex: none;
}

.tree-row {
  height: 20px;
  box-sizing: border-box;
  display: flex;
  border-bottom: 1px solid #e4e4e4;
  background: #fff;
}

.tree-row.alt {
  background: #f5f5f5;
}

.cell-name {
  width: 201px;
  flex: none;
  box-sizing: border-box;
  border-right: 2px solid #e4e4e4;
  display: flex;
  align-items: center;
  position: relative;
  white-space: nowrap;
  overflow: hidden;
  line-height: 19px;
  color: #222;
}

.cell-name.gray {
  color: #a2a2a2;
}

.cell-name.bold {
  font-weight: 700;
  color: #111;
}

.num {
  font-family: "Liberation Sans", sans-serif;
  color: #33405c;
}

.gray .num {
  color: #a2a2a2;
}

.cell-state {
  flex: 1;
  display: flex;
  align-items: center;
  padding-left: 6px;
  border-right: 2px solid #e4e4e4;
  margin-right: 2px;
}

/* tree connectors */
.vl {
  position: absolute;
  top: -1px;
  bottom: -1px;
  border-left: 1px dotted #888;
}

.vl.top {
  left: 9px;
  top: 10px;
  bottom: -11px;
}

.vl.lvl1 {
  left: 28px;
}

.vl.last {
  bottom: 9px;
}

.hl {
  position: absolute;
  top: 9px;
  border-top: 1px dotted #888;
}

.hl0 {
  left: 10px;
  width: 10px;
}

.hl1 {
  left: 29px;
  width: 10px;
}

.expander {
  position: absolute;
  left: 5px;
  top: 5px;
  width: 9px;
  height: 9px;
  box-sizing: border-box;
  border: 1px solid #888;
  background: #fff;
  font-family: "Liberation Sans", sans-serif;
  font-size: 9px;
  line-height: 7px;
  text-align: center;
  z-index: 1;
}

.chk-wrap {
  margin-left: 40px;
  width: 12px;
  height: 12px;
  flex: none;
  position: relative;
}

.chk {
  display: block;
  width: 12px;
  height: 12px;
  box-sizing: border-box;
  border: 1px solid #111;
  background: #fff;
}

.chk svg {
  display: block;
  margin: -1px;
}

.warn {
  position: absolute;
  left: -3px;
  top: -5px;
}

.row-icon {
  flex: none;
}

.row-icon.lv0 {
  margin-left: 20px;
}

.row-icon.lv1 {
  margin-left: 3px;
}

.green {
  flex: none;
  margin-left: 21px;
}

.green + .row-icon {
  margin-left: 2px;
}

.row-text {
  margin-left: 3px;
}

.hscroll {
  height: 15px;
  flex: none;
  margin-top: 1px;
  display: flex;
  align-items: flex-start;
  background: #f2f2f2;
  position: relative;
}

.chev {
  width: 21px;
  font-family: "DejaVu Sans", sans-serif;
  font-size: 20px;
  line-height: 14px;
  text-align: center;
  color: #555;
}

.thumb {
  width: 194px;
  height: 15px;
  background: #c9c9c9;
}

.chev.right {
  margin-left: auto;
  margin-right: 1px;
}

.gutter {
  width: 60px;
  flex: none;
  box-sizing: border-box;
  border-right: 1px solid #a8a8a8;
  background: linear-gradient(#dcdcdc, #cdcdcd);
}

.viewport {
  flex: 1;
  position: relative;
  background: linear-gradient(#c2c3c5, #e7e8ea 90%);
  overflow: hidden;
}

.model {
  position: absolute;
  left: 0;
  top: 0;
}

.watermark {
  position: absolute;
  left: 1143px;
  top: 593px;
  display: flex;
  align-items: center;
  gap: 4px;
}

.wm-big {
  display: flex;
  align-items: center;
  font-size: 37px;
  font-weight: 700;
  line-height: 42px;
  color: #f1f2f4;
  white-space: nowrap;
}

.wm-latin {
  font-family: "Liberation Sans", sans-serif;
  font-size: 44px;
  margin-right: 2px;
}

.wm-small {
  font-family: "Liberation Sans", sans-serif;
  font-size: 12.5px;
  font-weight: 700;
  line-height: 14px;
  letter-spacing: 4.6px;
  color: #f0f1f3;
  margin-top: 6px;
  white-space: nowrap;
}

/* dialog */
.dialog {
  position: absolute;
  left: 357px;
  top: 29px;
  width: 437px;
  height: 622px;
  display: flex;
  flex-direction: column;
}

.dlg-title {
  height: 29px;
  flex: none;
  display: flex;
  align-items: center;
  gap: 4px;
  padding: 0 3px 0 9px;
  border-radius: 6px 6px 0 0;
  background: linear-gradient(#6a6a6a, #303030 30%, #191919 36%);
  color: #fff;
}

.dlg-name {
  flex: 1;
  font-size: 14px;
  padding-top: 4px;
}

.dlg-help,
.dlg-close {
  width: 22px;
  height: 22px;
  display: flex;
  align-items: center;
  justify-content: center;
  border-radius: 3px;
  box-sizing: border-box;
}

.dlg-help {
  background: linear-gradient(#5e5e5e, #2a2a2a);
  border: 1px solid #6a6a6a;
  font-family: "Liberation Sans", sans-serif;
  font-size: 16px;
  font-weight: 700;
}

.dlg-close {
  background: linear-gradient(#f06a40, #d83c18);
  border: 1px solid #8a3a20;
}

.dlg-body {
  flex: 1;
  min-height: 0;
  box-sizing: border-box;
  padding: 10px 11px 7px 9px;
  border-left: 1px solid #a0a0a0;
  border-right: 1px solid #a0a0a0;
  background: linear-gradient(#ececec 80%, #dcdcdc);
  display: flex;
  flex-direction: column;
}

.tabs {
  display: grid;
  margin-left: 2px;
  width: 413px;
  flex: none;
}

.tabs-a {
  grid-template-columns: 118px 113px 83px 93px;
  gap: 2px;
  height: 20px;
}

.tabs-b {
  grid-template-columns: 137px 137px 139px;
  height: 21px;
}

.dtab {
  box-sizing: border-box;
  border: 1px solid #7c7c7c;
  border-bottom: 0;
  border-radius: 3px 3px 0 0;
  background: linear-gradient(#e2e2e2, #f2f2f2 25%, #d4d4d4 60%, #b8b8b8);
  text-align: center;
  line-height: 21px;
  white-space: nowrap;
  overflow: hidden;
}

.dtab.on {
  height: 24px;
  margin-top: -2px;
  background: #eff0f0;
  line-height: 24px;
  position: relative;
  z-index: 1;
}

.panel {
  flex: 1;
  min-height: 0;
  box-sizing: border-box;
  padding: 11px 8px;
  border: 1px solid #868686;
  background: linear-gradient(#ececec 85%, #dddddd);
}

.last-role {
  display: flex;
  line-height: 17px;
}

.role-name {
  margin-left: 4px;
  font-family: "Liberation Sans", sans-serif;
  color: #1a3460;
}

.role-box {
  width: 76px;
  height: 90px;
  margin-top: 5px;
  box-sizing: border-box;
  border: 2px solid #b4b4b4;
  background: #cdcdcd;
  padding: 2px 7px;
  display: flex;
  flex-direction: column;
  align-items: flex-start;
}

.role-title {
  font-weight: 700;
  line-height: 18px;
  margin-bottom: 5px;
  color: #111;
}

.pbtn {
  width: 57px;
  height: 25px;
  padding: 0;
  font: inherit;
  color: #111;
  border: 1px solid #747474;
  border-radius: 4px;
  box-shadow: 0 0 0 1px #f4f4f4;
  background: linear-gradient(#dcdcdc, #f4f4f4 20%, #dedede 55%, #b8b8b8);
}

.pbtn.focus {
  outline: 1px dotted #222;
  outline-offset: -3px;
}

.role-box .pbtn + .pbtn {
  margin-top: 4px;
}

.pbtn.wide {
  display: block;
  width: 167px;
  height: 24px;
  margin-top: 12px;
}

.dlg-actions {
  height: 25px;
  flex: none;
  margin-top: 6px;
  display: flex;
  justify-content: flex-end;
  gap: 4px;
  padding-right: 2px;
}

.dlg-foot {
  height: 9px;
  flex: none;
  background: linear-gradient(#1a1a1a, #5a5a5a 15%, #1a1a1a 30%, #111);
  border-radius: 0 0 4px 4px;
}
</style>

<style>
html,
body {
  margin: 0;
  background: #d4d4d4;
}
</style>
